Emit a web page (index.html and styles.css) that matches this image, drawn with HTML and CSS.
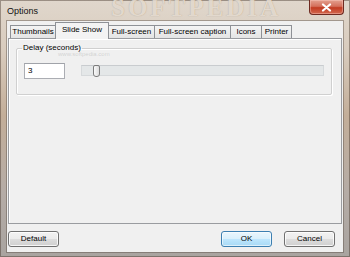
FILE: index.html
```html
<!DOCTYPE html>
<html lang="en">
<head>
    <meta charset="UTF-8">
    <meta name="viewport" content="width=device-width, initial-scale=1.0">
    <title>Options</title>
    <link rel="stylesheet" href="styles.css">
</head>
<body>
    <div class="window">
        <div class="titlebar">
            <span class="title">Options</span>
            <span class="watermark">SOFTPEDIA</span>
            <div class="close">
                <svg width="11" height="9" viewBox="0 0 11 9"><path d="M2 1.5 L9 7.5 M9 1.5 L2 7.5" stroke="#fff" stroke-width="2.2" stroke-linecap="round"/></svg>
            </div>
        </div>
        <div class="client">
            <div class="tabs">
                <div class="tab tab-thumbs">Thumbnails</div>
                <div class="tab tab-slides active">Slide Show</div>
                <div class="tab tab-full">Full-screen</div>
                <div class="tab tab-caption">Full-screen caption</div>
                <div class="tab tab-icons">Icons</div>
                <div class="tab tab-printer">Printer</div>
            </div>
            <div class="panel">
                <fieldset class="group">
                    <legend>Delay (seconds)</legend>
                    <div class="row">
                        <div class="input">3</div>
                        <div class="slider"><div class="thumb"></div></div>
                    </div>
                </fieldset>
                <span class="site">www.softpedia.com</span>
            </div>
            <div class="buttons">
                <div class="btn">Default</div>
                <div class="btn ok">OK</div>
                <div class="btn">Cancel</div>
            </div>
        </div>
    </div>
</body>
</html>
```

FILE: styles.css
```css
body {
    margin: 0;
    font-family: "Liberation Sans", Arial, sans-serif;
    font-size: 8px;
    color: #000;
    background: #b9a998;
}

.window {
    position: relative;
    width: 350px;
    height: 257px;
    box-sizing: border-box;
    padding: 0 7px 5px 7px;
    display: flex;
    flex-direction: column;
    overflow: hidden;
    background: linear-gradient(to bottom, #e0d7cc 0, #d8cbbd 20%, #c3ae99 45%, #b5aca6 75%, #a9a4a0 100%);
    box-shadow: inset 0 0 0 1px rgba(70, 55, 45, 0.45);
}

/* title bar */
.titlebar {
    position: relative;
    height: 21px;
    display: flex;
    align-items: flex-start;
    flex-shrink: 0;
}

.title {
    position: relative;
    z-index: 1;
    font-size: 9px;
    margin-top: 6px;
    color: #111;
}

.watermark {
    position: absolute;
    left: 104px;
    top: -6px;
    font-family: "Liberation Serif", serif;
    font-size: 25px;
    font-weight: bold;
    letter-spacing: 3px;
    line-height: 28px;
    color: rgba(240, 232, 222, 0.8);
    text-shadow: 0 0 1px rgba(140, 120, 100, 0.6);
}

.close {
    position: relative;
    z-index: 1;
    margin-left: auto;
    margin-right: -1px;
    width: 35px;
    height: 15px;
    box-sizing: border-box;
    display: flex;
    align-items: center;
    justify-content: center;
    border: 1px solid #6e2a20;
    border-top: none;
    border-radius: 0 0 4px 4px;
    background: linear-gradient(to bottom, #e4a08f 0, #d4705c 45%, #c23b22 55%, #d2694f 100%);
    box-shadow: inset 0 0 0 1px rgba(255, 210, 200, 0.4);
}

/* client area */
.client {
    flex: 1;
    display: flex;
    flex-direction: column;
    padding: 0 1px 5px 1px;
    background: #f0f0f0;
    box-shadow: 0 0 0 1px rgba(90, 80, 70, 0.45);
}

.tabs {
    height: 17px;
    display: flex;
    align-items: flex-end;
    padding-left: 2px;
    flex-shrink: 0;
}

.tab {
    height: 13px;
    box-sizing: border-box;
    margin-right: -1px;
    line-height: 12px;
    text-align: center;
    border: 1px solid #8e9196;
    border-bottom: none;
    background: linear-gradient(to bottom, #f4f4f4, #e4e4e4);
    white-space: nowrap;
}

.tab-thumbs { width: 46px; }
.tab-slides { width: 54px; }
.tab-full { width: 47px; }
.tab-caption { width: 77px; }
.tab-icons { width: 32px; }
.tab-printer { width: 31px; }

.tab.active {
    position: relative;
    z-index: 1;
    height: 17px;
    margin-bottom: -1px;
    line-height: 14px;
    background: #f3f3f3;
}

.panel {
    position: relative;
    flex: 1;
    border: 1px solid #9a9ca0;
    box-shadow: inset 1px 1px 0 #fff;
    background: #f0f0f0;
    padding: 4px 9px 0 7px;
}

.group {
    margin: 0;
    padding: 10px 7px 15px 7px;
    border: 1px solid #d0d0d0;
    box-shadow: inset 1px 1px 0 #fff, 1px 1px 0 #fff;
    border-radius: 2px;
}

.group legend {
    margin-left: -2px;
    padding: 0 1px;
    line-height: 10px;
}

.row {
    display: flex;
    align-items: flex-start;
    gap: 16px;
}

.input {
    width: 41px;
    height: 16px;
    box-sizing: border-box;
    border: 1px solid #abadb3;
    border-top-color: #a0a3a9;
    background: #fff;
    padding-left: 3px;
    line-height: 14px;
}

.slider {
    position: relative;
    flex: 1;
    height: 11px;
    margin-top: 2px;
    box-sizing: border-box;
    border: 1px solid #d6d9db;
    border-top-color: #c9cccf;
    background: #e4e7e8;
}

.thumb {
    position: absolute;
    left: 11px;
    top: -1px;
    width: 7px;
    height: 12px;
    box-sizing: border-box;
    border: 1px solid #7c7c7c;
    border-radius: 2px 2px 3px 3px;
    background: linear-gradient(to right, #fafafa, #dcdcdc);
}

.site {
    position: absolute;
    left: 49px;
    top: 12px;
    font-size: 6px;
    color: rgba(150, 150, 150, 0.35);
}

.buttons {
    display: flex;
    margin-top: 7px;
    padding-right: 7px;
    flex-shrink: 0;
}

.btn {
    width: 51px;
    height: 16px;
    box-sizing: border-box;
    border: 1px solid #707070;
    border-radius: 3px;
    text-align: center;
    line-height: 14px;
    background: linear-gradient(to bottom, #f2f2f2 0, #ebebeb 50%, #dddddd 51%, #cfcfcf 100%);
    box-shadow: inset 0 0 0 1px rgba(255, 255, 255, 0.8);
}

.btn.ok {
    margin-left: auto;
    margin-right: 12px;
    border-color: #3c7fb1;
    background: linear-gradient(to bottom, #eaf6fd 0, #d9f0fc 50%, #bee6fd 51%, #a7d9f5 100%);
    box-shadow: inset 0 0 0 1px rgba(255, 255, 255, 0.6);
}
```
